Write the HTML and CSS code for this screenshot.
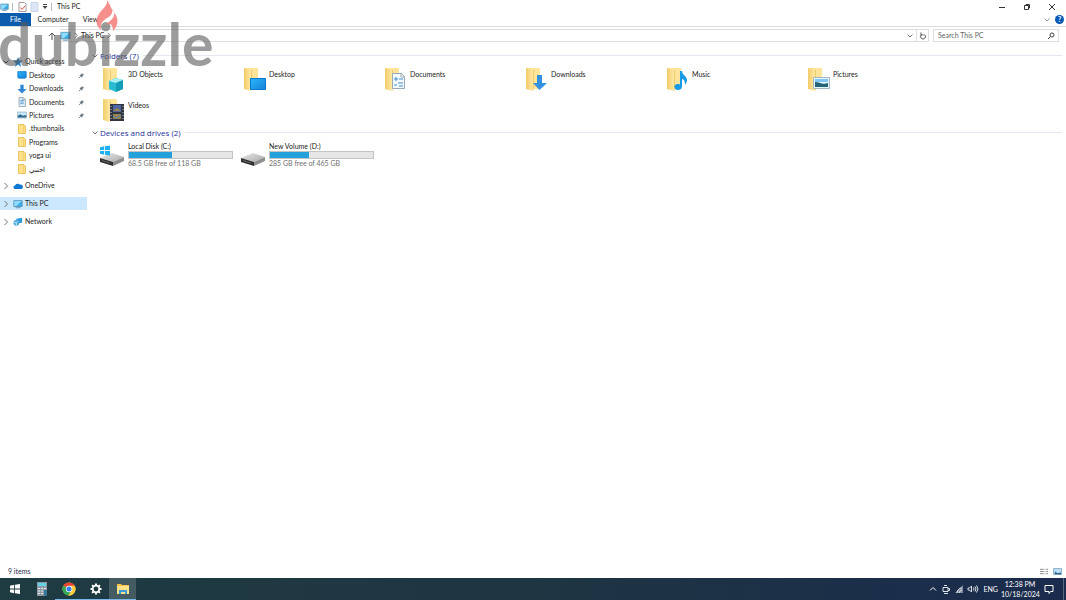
FILE: index.html
```html
<!DOCTYPE html>
<html lang="en">
<head>
<meta charset="utf-8">
<title>This PC</title>
<link rel="stylesheet" href="styles.css">
</head>
<body>
<svg class="defs" aria-hidden="true">
  <defs>
    <linearGradient id="gold" x1="0" x2="1"><stop offset="0" stop-color="#f2cb68"/><stop offset="1" stop-color="#ffe9a6"/></linearGradient>
    <linearGradient id="sky" x1="0" y1="0" x2="1" y2="1"><stop offset="0" stop-color="#2bb4fb"/><stop offset="1" stop-color="#1583d8"/></linearGradient>
    <linearGradient id="metal" x1="0" y1="0" x2="1" y2="1"><stop offset="0" stop-color="#e8e8e8"/><stop offset="1" stop-color="#a9a9a9"/></linearGradient>
    <symbol id="folder" viewBox="0 0 22 26"><path d="M2 1h13v21H2z" fill="#ffe49a"/><path d="M1 1l7 2v21l-7-2z" fill="url(#gold)"/><path d="M8 3h1v19l-1 2z" fill="#f0cb6c"/></symbol>
    <symbol id="pc" viewBox="0 0 12 10"><path d="M1 1h10v7H1z" fill="#35aee9" stroke="#5b8eae"/><path d="M1.500 1.500h9L4 7.500H1.500z" fill="#8ddcff"/><path d="M3 9h6v1H3z" fill="#5b8eae"/></symbol>
    <symbol id="desktop" viewBox="0 0 12 10"><path d="M1 1h10v7H1z" fill="url(#sky)" stroke="#0878ce"/><path d="M2 9h8" stroke="#1b8ce0"/></symbol>
    <symbol id="down" viewBox="0 0 12 12"><path d="M4 1h4v5h3.500L6 11.500.500 6H4z" fill="#2f87d6"/></symbol>
    <symbol id="doc" viewBox="0 0 12 12"><path d="M2.500.500h5l2.500 2.500v8.500H2.500z" fill="#eaf3fb" stroke="#829aaf"/><path d="M4 4h4M4 6h4M4 8h4" stroke="#3e8fd1"/><path d="M7 .500v3h3" fill="#fff" stroke="#829aaf"/></symbol>
    <symbol id="pic" viewBox="0 0 12 8"><path d="M.500.500h11v7H.500z" fill="#c8e8fb" stroke="#9cb4c7"/><path d="M1 5l3-2 3 2 4-1v3H1z" fill="#336b91"/></symbol>
    <symbol id="mini" viewBox="0 0 9 10"><path d="M1 .500h5.500v1.500H8v7.500H1z" fill="#ffe18c" stroke="#ebc35f"/><path d="M6 2v7" stroke="#f6d06b"/></symbol>
    <symbol id="pin" viewBox="0 0 8 8"><path d="M4.500 1L7 3.500 5.500 4 4.500 6.500 1.500 3.500 4 2.500z" fill="#6d7880"/><path d="M3 5L1 7" stroke="#6d7880"/></symbol>
    <symbol id="right" viewBox="0 0 6 8"><path d="M1.500 1l3 3-3 3" fill="none" stroke="currentColor"/></symbol>
    <symbol id="chev" viewBox="0 0 8 6"><path d="M1.500 1.500L4 4l2.500-2.500" fill="none" stroke="currentColor"/></symbol>
    <symbol id="drive" viewBox="0 0 26 22"><path d="M1 14l12-5 12 4-11 5z" fill="url(#metal)"/><path d="M1 14l13 4v4L1 18z" fill="#303030"/><path d="M14 18l11-5v4l-11 5z" fill="#8f8f8f"/><path d="M3 16.500l8 2.500" stroke="#646464"/></symbol>
    <symbol id="win" viewBox="0 0 12 12"><path d="M0 2l5-1v4.500H0zM6 .800L12 0v5.500H6zM0 6.500h5V11l-5-1zM6 6.500h6V12l-6-.800z" fill="currentColor"/></symbol>
  </defs>
</svg>

<header>
  <div class="titlebar">
    <svg class="i-pc"><use href="#pc"/></svg><span class="sep"></span>
    <svg class="i-doc" viewBox="0 0 9 10"><path d="M1 .500h5.500L8 2v7.500H1z" fill="#fff" stroke="#a79c9c"/><path d="M2.500 5.500l1.500 2L7 4" fill="none" stroke="#dc5745"/></svg>
    <svg class="i-doc" viewBox="0 0 9 10"><path d="M1 .500h7v9H1z" fill="#dde6f7" stroke="#c9d3e9"/></svg>
    <svg class="i-custom" viewBox="0 0 6 6"><path d="M1 .500h4" stroke="#444"/><path d="M.500 2h5L3 5z" fill="#444"/></svg><span class="sep"></span>
    <h1>This PC</h1>
    <div class="controls">
      <button aria-label="Minimize"><svg viewBox="0 0 8 8"><path d="M1 4.500h6" stroke="#333"/></svg></button>
      <button aria-label="Restore"><svg viewBox="0 0 8 8"><path d="M1.500 2.500h4v4h-4zM3 2V1.500h3.500V5H6" fill="none" stroke="#333"/></svg></button>
      <button aria-label="Close"><svg viewBox="0 0 8 8"><path d="M1 1l6 6M7 1L1 7" stroke="#333"/></svg></button>
    </div>
  </div>
  <div class="tabs">
    <button class="file">File</button><button class="computer">Computer</button><button class="view">View</button>
    <button class="expand" aria-label="Expand the ribbon"><svg class="i-chev"><use href="#chev"/></svg></button>
    <button class="help" aria-label="Help">?</button>
  </div>
  <div class="address-row">
    <button class="up" aria-label="Up"><svg viewBox="0 0 8 8"><path d="M4 8V1M1 4l3-3 3 3" fill="none" stroke="#555"/></svg></button>
    <div class="address">
      <svg class="i-pc"><use href="#pc"/></svg><svg class="i-right"><use href="#right"/></svg><a href="#pc">This PC</a><svg class="i-right"><use href="#right"/></svg>
      <button class="history" aria-label="Previous locations"><svg class="i-chev"><use href="#chev"/></svg></button>
      <button class="refresh" aria-label="Refresh"><svg viewBox="0 0 8 8"><path d="M2.500 2.500a2.500 2.500 0 1 0 3 0M2 .500v2.500h2.500" fill="none" stroke="#555"/></svg></button>
    </div>
    <label class="search"><input type="text" placeholder="Search This PC" aria-label="Search This PC"><svg viewBox="0 0 8 8"><circle cx="5" cy="3" r="2" fill="none" stroke="#444"/><path d="M3.500 4.500L1 7" stroke="#444"/></svg></label>
  </div>
  <div class="logo">
    <svg viewBox="0 0 22 32" aria-hidden="true"><path d="M11 0C12 6 6 9 3 14c-4 6-3 12 2 16-1-6 1-9 6-12 4-2 6-5 5-9 3 4 3 8-2 12-3 2-3 3-3 4 3-2 6-1 6 6 5-5 6-12 2-17C15 9 14 4 11 0z" fill="#f47c78"/></svg>dubizzle
  </div>
</header>

<main>
  <nav aria-label="Locations">
    <div class="quick">
      <a class="root" href="#quick"><svg class="i-chev dark"><use href="#chev"/></svg><svg class="i-nav" viewBox="0 0 10 10"><path d="M5 0l1.300 3.400L10 3.500 7.200 5.900 8 10 5 7.600 2 10l.800-4.100L0 3.500l3.700-.1z" fill="#2784ce"/></svg>Quick access</a>
      <a href="#desktop"><svg class="i-nav"><use href="#desktop"/></svg>Desktop<svg class="i-pin"><use href="#pin"/></svg></a>
      <a href="#downloads"><svg class="i-nav"><use href="#down"/></svg>Downloads<svg class="i-pin"><use href="#pin"/></svg></a>
      <a href="#documents"><svg class="i-nav"><use href="#doc"/></svg>Documents<svg class="i-pin"><use href="#pin"/></svg></a>
      <a href="#pictures"><svg class="i-nav"><use href="#pic"/></svg>Pictures<svg class="i-pin"><use href="#pin"/></svg></a>
      <a href="#thumbnails"><svg class="i-nav"><use href="#mini"/></svg>.thumbnails</a>
      <a href="#programs"><svg class="i-nav"><use href="#mini"/></svg>Programs</a>
      <a href="#yoga"><svg class="i-nav"><use href="#mini"/></svg>yoga ui</a>
      <a href="#foreign"><svg class="i-nav"><use href="#mini"/></svg><span lang="ar">اجنبي</span></a>
    </div>
    <div class="roots">
      <a class="root" href="#onedrive"><svg class="i-chev"><use href="#right"/></svg><svg class="i-nav" viewBox="0 0 12 8"><path d="M2.500 7.500a2 2 0 0 1 0-4A3.500 3.500 0 0 1 8.500 2.500a2.500 2.500 0 0 1 1.500 5z" fill="#0f78d4"/></svg>OneDrive</a>
      <a class="root selected" href="#pc" aria-current="page"><svg class="i-chev"><use href="#right"/></svg><svg class="i-nav"><use href="#pc"/></svg>This PC</a>
      <a class="root" href="#network"><svg class="i-chev"><use href="#right"/></svg><svg class="i-nav" viewBox="0 0 12 10"><path d="M4 1l7-1v6L4 7z" fill="#2f9bdc"/><circle cx="4" cy="6" r="3.500" fill="#4aa7df"/><path d="M1 5l3 1 2-2M4 6v3" fill="none" stroke="#d4f0ff"/></svg>Network</a>
    </div>
  </nav>
  <section class="content">
    <h2><svg class="i-chev"><use href="#chev"/></svg>Folders (7)</h2>
    <div class="grid folders">
      <a href="#3d"><svg viewBox="0 0 26 26"><use href="#folder" width="22" height="26"/><path d="M7 14l7-3 7 2v9l-7 3-7-3z" fill="#29bcd1"/><path d="M7 14l7-3 7 2-7 3z" fill="#a8f0f4"/><path d="M14 16l7-3v9l-7 3z" fill="#159cb6"/></svg>3D Objects</a>
      <a href="#desktop"><svg viewBox="0 0 26 26"><use href="#folder" width="22" height="26"/><path d="M7.500 11.500h15v11h-15z" fill="url(#sky)" stroke="#0878ce"/></svg>Desktop</a>
      <a href="#documents"><svg viewBox="0 0 26 26"><use href="#folder" width="22" height="26"/><path d="M8.500 6.500h9l3 3v12h-12z" fill="#f4f9fd" stroke="#9aa9b5"/><path d="M17 6v4h4" fill="none" stroke="#9aa9b5"/><path d="M10 12h4M12 10v4M15 12h4M14 16h5M10 18h3M15 19h4" stroke="#3e8fd1"/></svg>Documents</a>
      <a href="#downloads"><svg viewBox="0 0 26 26"><use href="#folder" width="22" height="26"/><path d="M12 8h5v8h5l-7.500 7L8 16h4z" fill="#3391df"/></svg>Downloads</a>
      <a href="#music"><svg viewBox="0 0 26 26"><use href="#folder" width="22" height="26"/><path d="M14 4h2c0 4 5 5 5 9 0 2-1 3-2 5 0-4-1-6-3-6v7c0 3-2 4-4 4-4 0-5-5-1-6 1 0 2 0 3 .500z" fill="#169be6"/></svg>Music</a>
      <a href="#pictures"><svg viewBox="0 0 26 26"><use href="#folder" width="22" height="26"/><path d="M6.500 10.500h16v11h-16z" fill="#e6f6ff" stroke="#a6b6c3"/><path d="M8 12h13v3H8z" fill="#7fc6f4"/><path d="M8 15c5 0 7 3 13 1v4H8z" fill="#256376"/></svg>Pictures</a>
      <a href="#videos"><svg viewBox="0 0 26 26"><use href="#folder" width="22" height="26"/><path d="M8 6h14v17H8z" fill="#303642"/><path d="M9 8v14M21 8v14" stroke="#b9bdc6" stroke-dasharray="1 2"/><path d="M11 7h8v7h-8z" fill="#4f65a4"/><path d="M11 13l4-3 4 3zM11 16h8v5h-8z" fill="#99844b"/><path d="M11 18l3 2 5-3" fill="none" stroke="#4a82bb"/></svg>Videos</a>
    </div>
    <h2><svg class="i-chev"><use href="#chev"/></svg>Devices and drives (2)</h2>
    <div class="grid drives">
      <a href="#c"><svg viewBox="0 0 26 22"><use href="#drive"/><svg x="1" y="1" width="10" height="11" color="#1cb0f0"><use href="#win" width="10" height="11"/></svg></svg>
        <span class="info"><span>Local Disk (C:)</span><span class="bar"><span style="width:42%"></span></span><span class="free">68.5 GB free of 118 GB</span></span></a>
      <a href="#d"><svg viewBox="0 0 26 22"><use href="#drive"/></svg>
        <span class="info"><span>New Volume (D:)</span><span class="bar"><span style="width:38%"></span></span><span class="free">285 GB free of 465 GB</span></span></a>
    </div>
  </section>
</main>

<div class="status"><span>9 items</span>
  <button aria-label="Details view"><svg viewBox="0 0 10 8"><path d="M0 1.500h4M0 4h4M0 6.500h4M5 1.500h1M7 1.500h2M5 4h1M7 4h2M5 6.500h1M7 6.500h2" stroke="#777"/></svg></button>
  <button aria-label="Large icons"><svg viewBox="0 0 10 8"><path d="M.500.500h9v7h-9z" fill="#b9def5" stroke="#83a9c5"/><path d="M2 4l3 2 4-1v2H2z" fill="#285f89"/></svg></button>
</div>

<footer>
  <button class="app start" aria-label="Start"><svg viewBox="0 0 12 12"><use href="#win"/></svg></button>
  <button class="app" aria-label="Calculator"><svg viewBox="0 0 12 14"><path d="M1 0h10v14H1z" fill="#8f9ca4"/><path d="M2 1h8v3H2z" fill="#63d3e8"/><path d="M2 6.500h8M2 9h8M2 11.500h5" stroke="#e3e9ec" stroke-dasharray="2 1"/><path d="M8 8h3v6H8z" fill="#38799a"/></svg></button>
  <button class="app open" aria-label="Chrome"><svg viewBox="0 0 14 14"><circle cx="7" cy="7" r="6.500" fill="#ffcd40"/><path d="M7 7L1.400 3.700A6.500 6.500 0 0 1 12.600 3.700z" fill="#e94335"/><path d="M7 7L1.400 3.700A6.500 6.500 0 0 0 6.500 13.500L9.500 8.500z" fill="#31a853"/><path d="M7 3.700h5.600a6.500 6.500 0 0 1-6.100 9.800L10 8z" fill="#ffcd40"/><circle cx="7" cy="7" r="3.200" fill="#fff"/><circle cx="7" cy="7" r="2.500" fill="#347de8"/></svg></button>
  <button class="app open" aria-label="Settings"><svg viewBox="0 0 14 14"><circle cx="7" cy="7" r="3.300" fill="none" stroke="#fff" stroke-width="1.700"/><path d="M7 1.500v2M7 10.500v2M1.500 7h2M10.500 7h2M3.100 3.100l1.500 1.500M9.400 9.400l1.500 1.500M3.100 10.900l1.500-1.500M9.400 4.600l1.500-1.500" stroke="#fff" stroke-width="2"/></svg></button>
  <button class="app open active" aria-label="File Explorer"><svg viewBox="0 0 14 14"><path d="M1 2h4l1 1h7v9H1z" fill="#f5c44b"/><path d="M1 4h12v8H1z" fill="#ffe18a"/><path d="M3 8h8v4H9v-2H5v2H3z" fill="#3b9bd5"/></svg></button>
  <div class="tray">
    <svg viewBox="0 0 10 10"><path d="M2 6.500l3-3 3 3" fill="none" stroke="#fff"/></svg>
    <svg viewBox="0 0 10 10"><path d="M2 3.500h5v4H2zM7 4.500h1.500v2H7M3 1.500h3M3 9.500h4" fill="none" stroke="#dde3ea"/></svg>
    <svg viewBox="0 0 10 10"><path d="M1 9L9 1v8z" fill="#7d899c"/><path d="M3 9a5 5 0 0 1 5-5M5 9a4 4 0 0 1 3-3" fill="none" stroke="#e2e7ed"/></svg>
    <svg class="volume" viewBox="0 0 12 10"><path d="M1 4h1.500l2-2v6l-2-2H1zM6.500 3.500q1 1.500 0 3M8 2.500q2 2.500 0 5M9.500 1.500q3 3.500 0 7" fill="none" stroke="#dde3ea"/></svg>
    <span class="lang">ENG</span>
    <time datetime="2024-10-18T12:38">12:38 PM<br>10/18/2024</time>
    <button aria-label="Notifications"><svg viewBox="0 0 10 10"><path d="M1 1.500h8v6H6.500l-1.500 2v-2H1z" fill="none" stroke="#fff"/></svg></button>
  </div>
</footer>
</body>
</html>
```
FILE: styles.css
```css
* { box-sizing: border-box; }
body { margin: 0; min-height: 100vh; display: flex; flex-direction: column; background: #fff; color: #222; font: 7px/9px Lato, "Noto Sans", sans-serif; }
button { border: 0; padding: 0; background: none; color: inherit; font: inherit; display: flex; align-items: center; justify-content: center; }
a { color: inherit; text-decoration: none; }
svg { display: block; flex: none; }
h1, h2 { margin: 0; font-weight: 400; }
h1 { font-size: 7px; }
.defs { position: absolute; width: 0; height: 0; }
header { position: relative; }

.titlebar { height: 13px; display: flex; align-items: center; gap: 3px; }
.i-pc { width: 11px; height: 10px; }
.i-doc { width: 9px; height: 10px; }
.titlebar .i-pc { width: 9px; }
.i-custom { width: 6px; height: 6px; }
.i-chev { width: 8px; height: 8px; color: #777; }
.dark { color: #222; }
.i-right { width: 6px; height: 7px; color: #666; }
.sep { width: 1px; height: 8px; background: #bbb; }
.titlebar .sep { margin-right: 2px; }
.controls { margin: 0 2px 0 auto; display: flex; }
.controls button { width: 25px; height: 12px; }
.controls svg { width: 8px; height: 8px; }

.tabs { height: 14px; display: flex; align-items: stretch; border-bottom: 1px solid #dadbdc; }
.file { width: 31px; background: #0c5cad; color: #fff; }
.computer { width: 44px; }
.view { width: 31px; }
.expand { margin-left: auto; width: 12px; color: #999; }
.expand svg { color: inherit; }
.tabs .help { width: 9px; height: 9px; margin: 2px 2px 0 2px; border-radius: 50%; background: #075bb4; color: #fff; font-weight: 700; }

.address-row { display: flex; align-items: center; gap: 4px; padding: 2px 7px 0 48px; }
.up svg { width: 8px; height: 8px; }
.address { flex: 1; height: 13px; display: flex; align-items: center; gap: 2px; border: 1px solid #dedede; border-left: 0; }
.history { margin-left: auto; width: 8px; }
.refresh { width: 12px; height: 11px; border-left: 1px solid #dedede; }
.refresh svg, .search svg { width: 8px; height: 8px; }
.search { width: 126px; height: 13px; display: flex; align-items: center; border: 1px solid #dedede; padding: 0 3px 0 4px; }
.search input { flex: 1; min-width: 0; border: 0; padding: 0; background: none; font: inherit; color: #222; outline: 0; }
.search input::placeholder { color: #666; opacity: 1; }

.logo { position: absolute; left: -2px; top: 9px; z-index: 2; font: 700 59px/70px Lato, sans-serif; color: rgb(90 90 90 / .6); pointer-events: none; }
.logo svg { position: absolute; left: 98px; top: -9px; width: 22px; height: 32px; opacity: .85; }

main { flex: 1; display: flex; padding-top: 8px; }
nav { width: 87px; padding-top: 5px; }
.quick { display: grid; grid-auto-rows: 1fr; height: 121px; }
nav a { display: flex; align-items: center; gap: 2px; padding-left: 17px; }
nav .root { padding-left: 2px; gap: 3px; }
nav .root .i-nav { margin-right: -1px; }
.i-nav { width: 10px; height: 10px; }
.i-pin { width: 7px; height: 7px; margin: 0 2px 0 auto; }
.roots { display: grid; gap: 5px; margin-top: 3px; }
.roots a { height: 13px; }
.selected { background: #cce8ff; }
.content { flex: 1; min-width: 0; padding: 0 4px; }
h2 { display: flex; align-items: center; gap: 1px; height: 11px; font: 8px/10px "Open Sans", sans-serif; color: #26329a; }
h2::after { content: ""; flex: 1; height: 1px; margin-left: 3px; background: #e5e8f0; }
.grid { display: grid; grid-template-columns: repeat(auto-fill, 141px); }
.folders { grid-template-rows: 31px; grid-auto-rows: 29px; padding: 6px 0 0 11px; }
.folders a { display: flex; line-height: 14px; }
.folders svg { width: 26px; height: 26px; }
.drives { padding: 4px 0 0 8px; }
.drives a { display: flex; gap: 3px; }
.drives > a > svg { width: 26px; height: 22px; margin-top: 2px; }
.info { width: 105px; display: grid; }
.bar { height: 8px; border: 1px solid #c4c4c4; background: #e6e6e6; }
.bar span { display: block; height: 100%; background: #26a0da; }
.free { color: #707070; }

.status { height: 13px; display: flex; align-items: center; gap: 4px; padding: 0 4px 0 8px; color: #26304d; }
.status span { margin-right: auto; }
.status svg { width: 9px; height: 7px; }

footer { height: 22px; display: flex; padding-left: 1px; background: linear-gradient(90deg, #1f3b42, #1e3542 50%, #1a2b4d); color: #fff; }
.app { width: 27px; border-bottom: 1px solid transparent; }
.app svg { width: 14px; height: 14px; }
.start svg { width: 10px; height: 10px; }
.open { border-bottom-color: #76b9ed; }
.active { background: #445b62; }
.tray { margin-left: auto; display: flex; align-items: center; gap: 3px; padding-right: 7px; border-right: 1px solid #596780; margin-right: 2px; }
.tray svg { width: 10px; height: 10px; }
.tray .volume { width: 12px; }
.tray > :nth-child(-n+3) { margin-right: 0; }
.lang { margin-left: 1px; }
time { width: 38px; text-align: center; line-height: 10px; }
.tray button { width: 14px; }
```
